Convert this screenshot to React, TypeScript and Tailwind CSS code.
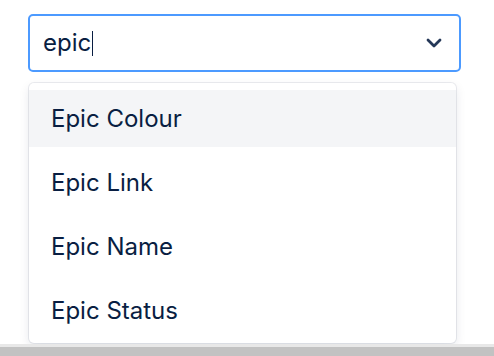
import React from 'react';

const OPTIONS = ['Epic Colour', 'Epic Link', 'Epic Name', 'Epic Status'];

export default function App() {
  return (
    <div className="h-[356px] w-[494px] bg-white flex flex-col overflow-hidden" style={{ fontFamily: 'Inter, "Noto Sans", sans-serif' }}>
      <div className="h-[344px] pl-[28px] pt-[14px]">
        <div className="w-[433px] h-[58px] border-2 border-[#4C9AFF] rounded-[5px] flex items-center pl-[13px] pr-[17px]">
          <span className="text-[24px] text-[#091E42] leading-none">epic</span>
          <span className="ml-[1px] w-px h-[25px] bg-[#091E42]" />
          <div className="flex-1" />
          <svg width="16" height="10" viewBox="0 0 16 10" className="text-[#253858]">
            <path d="M2 2l6 6 6-6" fill="none" stroke="currentColor" strokeWidth="2.8" strokeLinecap="round" strokeLinejoin="round" />
          </svg>
        </div>
        <div className="mt-[11px] ml-px w-[427px] h-[260px] rounded-[5px] bg-white pt-[7px] flex flex-col gap-[7px] shadow-[0_0_0_1px_rgba(9,30,66,0.08),0_4px_11px_rgba(9,30,66,0.1)]">
          {OPTIONS.map((o, i) => (
            <div
              key={o}
              className={`h-[57px] flex items-center pl-[22px] text-[24px] text-[#091E42] ${i === 0 ? 'bg-[#F4F5F7]' : ''}`}
            >
              {o}
            </div>
          ))}
        </div>
      </div>
      <div className="h-[3px] bg-[#E8E8E8]" />
      <div className="flex-1 bg-[#C2C2C2]" />
    </div>
  );
}
